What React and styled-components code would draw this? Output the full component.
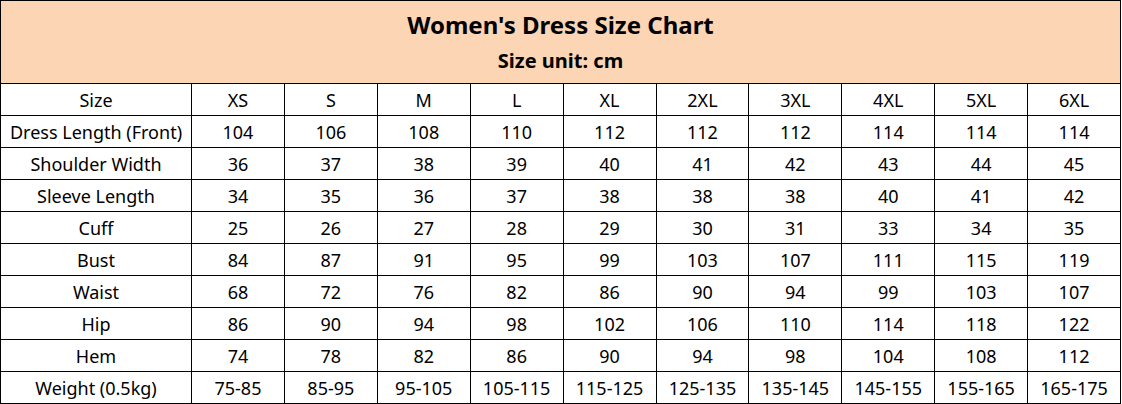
import React from "react";
import styled, { createGlobalStyle } from "styled-components";

const Global = createGlobalStyle`
  html, body { margin: 0; padding: 0; background: #fff; }
  body { font-family: "Noto Sans", "Open Sans", sans-serif; color: #000; }
`;

const Chart = styled.div`
  width: 1121px;
  box-sizing: border-box;
  display: grid;
  grid-template-columns: 190px repeat(10, 1fr);
  grid-template-rows: 82px repeat(10, 31px);
  gap: 1px;
  padding: 1px;
  background: #000;
`;

const Header = styled.div`
  grid-column: 1 / -1;
  background: #fcd5b4;
  display: flex;
  flex-direction: column;
  align-items: center;
  justify-content: flex-start;
  gap: 9px;
  padding-top: 9px;
  box-sizing: border-box;
`;

const Title = styled.div`
  font-size: 24px;
  font-weight: 700;
  line-height: 30px;
`;

const Subtitle = styled.div`
  font-size: 20px;
  font-weight: 700;
  line-height: 24px;
`;

const Cell = styled.div`
  background: #fff;
  display: flex;
  align-items: center;
  justify-content: center;
  font-size: 18px;
  white-space: nowrap;
  overflow: hidden;
`;

const sizes = ["XS", "S", "M", "L", "XL", "2XL", "3XL", "4XL", "5XL", "6XL"];
const rows = [
  ["Dress Length (Front)", 104, 106, 108, 110, 112, 112, 112, 114, 114, 114],
  ["Shoulder Width", 36, 37, 38, 39, 40, 41, 42, 43, 44, 45],
  ["Sleeve Length", 34, 35, 36, 37, 38, 38, 38, 40, 41, 42],
  ["Cuff", 25, 26, 27, 28, 29, 30, 31, 33, 34, 35],
  ["Bust", 84, 87, 91, 95, 99, 103, 107, 111, 115, 119],
  ["Waist", 68, 72, 76, 82, 86, 90, 94, 99, 103, 107],
  ["Hip", 86, 90, 94, 98, 102, 106, 110, 114, 118, 122],
  ["Hem", 74, 78, 82, 86, 90, 94, 98, 104, 108, 112],
  ["Weight (0.5kg)", "75-85", "85-95", "95-105", "105-115", "115-125", "125-135", "135-145", "145-155", "155-165", "165-175"],
];

export default function App() {
  return (
    <>
      <Global />
      <Chart>
        <Header>
          <Title>Women's Dress Size Chart</Title>
          <Subtitle>Size unit: cm</Subtitle>
        </Header>
        <Cell>Size</Cell>
        {sizes.map((s) => (
          <Cell key={s}>{s}</Cell>
        ))}
        {rows.map((r) =>
          r.map((v, i) => <Cell key={r[0] + i}>{v}</Cell>)
        )}
      </Chart>
    </>
  );
}
